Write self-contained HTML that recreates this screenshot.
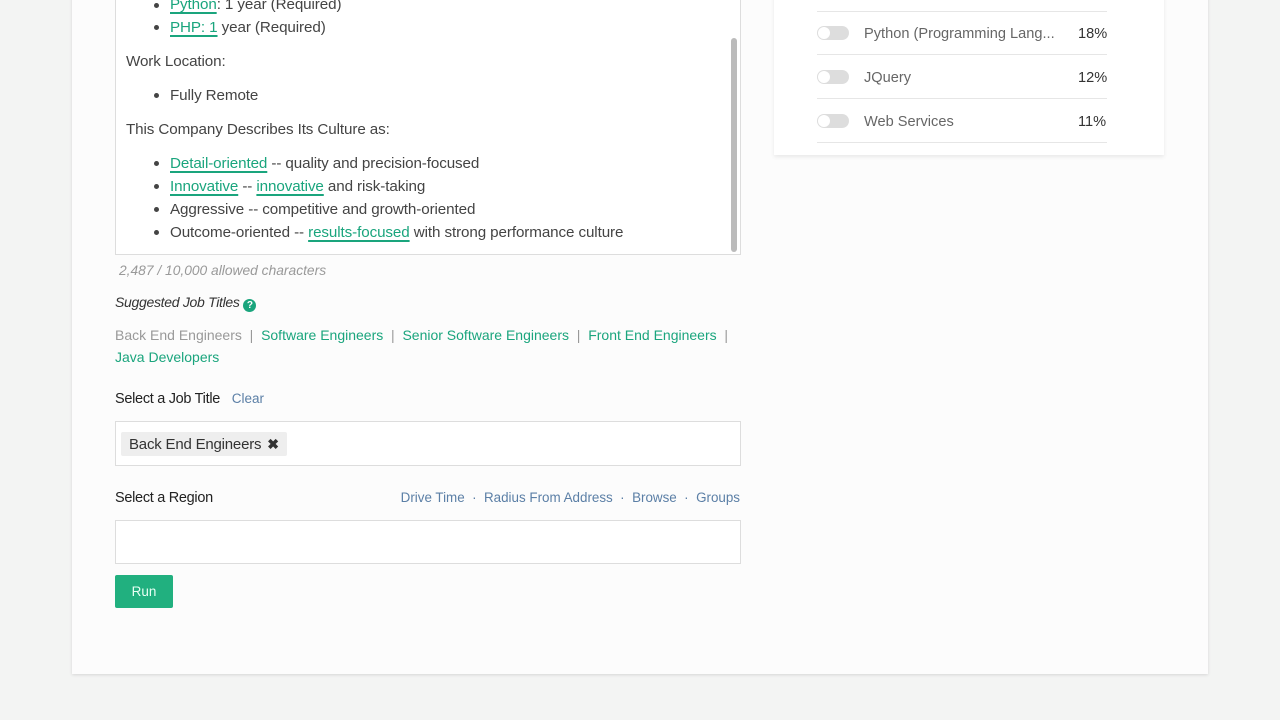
<!DOCTYPE html>
<html><head><meta charset="utf-8"><style>
*{box-sizing:border-box;margin:0;padding:0}
body{width:1280px;height:720px;background:#f3f4f3;font-family:"Liberation Sans",sans-serif;color:#444;position:relative;overflow:hidden;font-size:14px}
.card{position:absolute;left:72px;top:-10px;width:1136px;height:684px;background:#fcfcfc;box-shadow:0 1px 3px rgba(0,0,0,.12)}
.a{position:absolute;white-space:nowrap}
.g{color:#1aa57d;text-decoration:underline;text-decoration-color:#1aa57d;text-underline-offset:3px;text-decoration-thickness:2px}
.l{color:#1aa57d}
.b{color:#5b7fa6}
.dot{position:absolute;width:5px;height:5px;border-radius:50%;background:#444}
.tog{position:absolute;left:817px;width:32px;height:14px;border-radius:7px;background:#ddd}
.tog:after{content:"";position:absolute;left:1px;top:1px;width:12px;height:12px;border-radius:50%;background:#fff}
.hr{position:absolute;left:817px;width:290px;height:1px;background:#e6e6e6}
</style></head><body>
<div class="card"></div>
<div class="a" style="left:115px;top:-10px;width:626px;height:265px;border:1px solid #ddd;background:#fff"></div>
<div class="a" style="left:731px;top:38px;width:6px;height:214px;border-radius:3px;background:#bbb"></div>
<div style="font-size:15.2px;letter-spacing:-0.1px">
<div class="dot" style="left:154px;top:3px"></div><div class="a" style="left:170px;top:-4px"><span class="g">Python</span>: 1 year (Required)</div>
<div class="dot" style="left:154px;top:25px"></div><div class="a" style="left:170px;top:19px"><span class="g">PHP: 1</span> year (Required)</div>
<div class="a" style="left:126px;top:53px">Work Location:</div>
<div class="dot" style="left:154px;top:93px"></div><div class="a" style="left:170px;top:87px">Fully Remote</div>
<div class="a" style="left:126px;top:121px">This Company Describes Its Culture as:</div>
<div class="dot" style="left:154px;top:161px"></div><div class="a" style="left:170px;top:155px"><span class="g">Detail-oriented</span> -- quality and precision-focused</div>
<div class="dot" style="left:154px;top:184px"></div><div class="a" style="left:170px;top:178px"><span class="g">Innovative</span> -- <span class="g">innovative</span> and risk-taking</div>
<div class="dot" style="left:154px;top:207px"></div><div class="a" style="left:170px;top:201px">Aggressive -- competitive and growth-oriented</div>
<div class="dot" style="left:154px;top:230px"></div><div class="a" style="left:170px;top:224px">Outcome-oriented -- <span class="g">results-focused</span> with strong performance culture</div>
</div>
<div class="a" style="left:119px;top:263px;font-size:13.8px;font-style:italic;color:#999">2,487 / 10,000 allowed characters</div>
<div class="a" style="left:115px;top:294px;font-size:14px;font-style:italic;color:#333;letter-spacing:-0.3px">Suggested Job Titles <span style="display:inline-block;width:13px;height:13px;border-radius:50%;background:#1aa57d;color:#fff;font-size:10px;text-align:center;line-height:13px;font-style:normal;font-weight:bold;vertical-align:-1px">?</span></div>
<div class="a" style="left:115px;top:327px;font-size:14px;color:#999">Back End Engineers &nbsp;|&nbsp; <span class="l">Software Engineers</span> &nbsp;|&nbsp; <span class="l">Senior Software Engineers</span> &nbsp;|&nbsp; <span class="l">Front End Engineers</span> &nbsp;|</div>
<div class="a l" style="left:115px;top:349px;font-size:14px">Java Developers</div>
<div class="a" style="left:115px;top:391px;font-size:14.5px;color:#222;letter-spacing:-0.3px">Select a Job Title <span class="b" style="font-size:13.5px;margin-left:8px;letter-spacing:0">Clear</span></div>
<div class="a" style="left:115px;top:421px;width:626px;height:45px;border:1px solid #ddd;background:#fff"></div>
<div class="a" style="left:121px;top:432px;height:24px;padding:4px 8px 0;background:#eee;border-radius:2px;font-size:15px;color:#333;letter-spacing:-0.2px">Back End Engineers <b style="margin-left:2px;font-size:14px">✖</b></div>
<div class="a" style="left:115px;top:490px;font-size:14.5px;color:#222;letter-spacing:-0.3px">Select a Region</div>
<div class="a b" style="right:540px;top:490px;font-size:13.4px">Drive Time &nbsp;·&nbsp; Radius From Address &nbsp;·&nbsp; Browse &nbsp;·&nbsp; Groups</div>
<div class="a" style="left:115px;top:520px;width:626px;height:44px;border:1px solid #ddd;background:#fff"></div>
<div class="a" style="left:115px;top:575px;width:58px;height:33px;background:#21b07f;border-radius:2px;color:#e8fff4;font-size:13.5px;text-align:center;line-height:33px">Run</div>
<div class="a" style="left:774px;top:-10px;width:390px;height:165px;background:#fff;box-shadow:0 2px 4px rgba(0,0,0,.08)"></div>
<div class="hr" style="top:11px"></div>
<div class="tog" style="top:26px"></div><div class="a" style="left:864px;top:26px;color:#666;font-size:14.6px">Python (Programming Lang...</div><div class="a" style="left:1078px;top:26px;color:#333;font-size:14.6px">18%</div>
<div class="hr" style="top:54px"></div>
<div class="tog" style="top:70px"></div><div class="a" style="left:864px;top:70px;color:#666;font-size:14.6px">JQuery</div><div class="a" style="left:1078px;top:70px;color:#333;font-size:14.6px">12%</div>
<div class="hr" style="top:98px"></div>
<div class="tog" style="top:114px"></div><div class="a" style="left:864px;top:114px;color:#666;font-size:14.6px">Web Services</div><div class="a" style="left:1078px;top:114px;color:#333;font-size:14.6px">11%</div>
<div class="hr" style="top:142px"></div>
</body></html>
